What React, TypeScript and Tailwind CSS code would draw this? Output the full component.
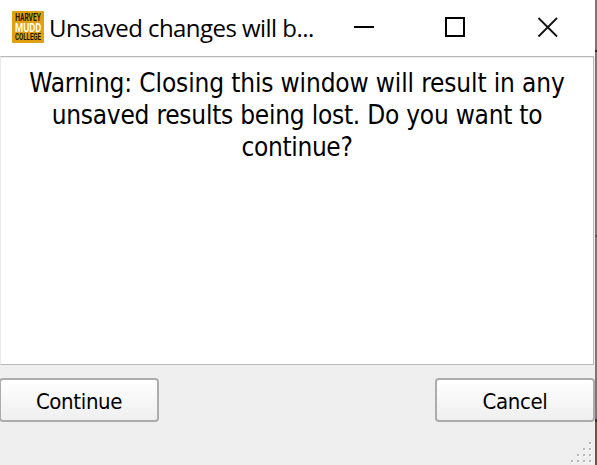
const grip = [[3], [2, 3], [1, 2, 3], [0, 1, 2, 3]];

function Logo() {
  return (
    <svg width="32" height="32" viewBox="0 0 32 32" className="shrink-0 overflow-visible">
      <rect width="32" height="32" rx="1" fill="#e0a010" />
      <g fontFamily="Roboto, sans-serif" fontWeight="700">
        <text x="3.2" y="10.2" fontSize="10" fill="#1c1608" textLength="25.6" lengthAdjust="spacingAndGlyphs">HARVEY</text>
        <text x="3" y="20.9" fontSize="13.4" fill="#fffaf0" textLength="26.4" lengthAdjust="spacingAndGlyphs">MUDD</text>
        <text x="3" y="29.2" fontSize="9.2" fill="#1c1608" textLength="26" lengthAdjust="spacingAndGlyphs">COLLEGE</text>
      </g>
    </svg>
  );
}

export default function App() {
  return (
    <div className="flex h-[465px] w-[597px] overflow-hidden bg-[#efefef] text-black">
      <div className="flex w-[595px] flex-col">
        <header className="flex h-14 items-start bg-white">
          <div className="flex pl-3 pt-[11px]">
            <Logo />
          </div>
          <h1 className="ml-[5px] w-[305px] whitespace-nowrap pt-3 font-['Open_Sans',sans-serif] text-[24px] leading-8 tracking-[-0.55px]">
            Unsaved changes will b...
          </h1>
          <svg width="210" height="24" viewBox="0 0 210 24" className="mt-4" fill="none" stroke="#000" strokeWidth="2">
            <path d="M0 11h20" />
            <path d="M92 2h18v18H92z" />
            <path d="M184.5 2l18.5 18.5M203 2l-18.5 18.5" stroke="#111" strokeWidth="1.8" />
          </svg>
        </header>
        <main className="h-[309px] w-[594px] border border-[#b9b9b9] border-l-[#e9e9e9] bg-white pt-[10px] shadow-[inset_0_1px_0_#ededed]">
          <p className="flex flex-col items-center whitespace-nowrap font-['DejaVu_Sans_Condensed','DejaVu_Sans',sans-serif] text-[26px] leading-8 [font-stretch:condensed]">
            <span className="tracking-[-0.14px]">Warning: Closing this window will result in any</span>
            <span className="tracking-[-0.24px]">unsaved results being lost. Do you want to</span>
            <span className="tracking-[-0.35px]">continue?</span>
          </p>
        </main>
        <div className="-ml-px mt-[13px] flex justify-between font-['DejaVu_Sans_Condensed','DejaVu_Sans',sans-serif] text-[22px] leading-none tracking-[-0.35px] [font-stretch:condensed]">
          <button className="flex h-11 w-[160px] items-center justify-center rounded-[4px] border-2 border-[#acacac] bg-linear-to-b from-white to-[#efefef] pt-[3px]">
            <span>Continue</span>
          </button>
          <button className="flex h-11 w-[160px] items-center justify-center rounded-[4px] border-2 border-[#acacac] bg-linear-to-b from-white to-[#efefef] pt-[3px]">
            <span>Cancel</span>
          </button>
        </div>
        <svg width="26" height="24" viewBox="0 0 26 24" className="ml-auto mt-[19px] shrink-0">
          {grip.map((row, y) =>
            row.map((x) => (
              <g key={`${x}-${y}`}>
                <rect x={x * 6 + 3} y={y * 6 + 2} width="2" height="2" fill="#fafafa" />
                <rect x={x * 6 + 2} y={y * 6 + 1} width="2" height="2" fill="#b8b8b8" />
              </g>
            )),
          )}
        </svg>
      </div>
      <div className="flex w-0.5 flex-col">
        <i className="h-[50px] bg-[#777]" />
        <i className="h-0.5 bg-[#222]" />
        <i className="h-[183px] bg-[#777]" />
        <i className="h-0.5 bg-[#555]" />
        <i className="h-[182px] bg-[#777]" />
        <i className="h-[3px] bg-[#333]" />
        <i className="grow bg-[#665848]" />
      </div>
    </div>
  );
}
